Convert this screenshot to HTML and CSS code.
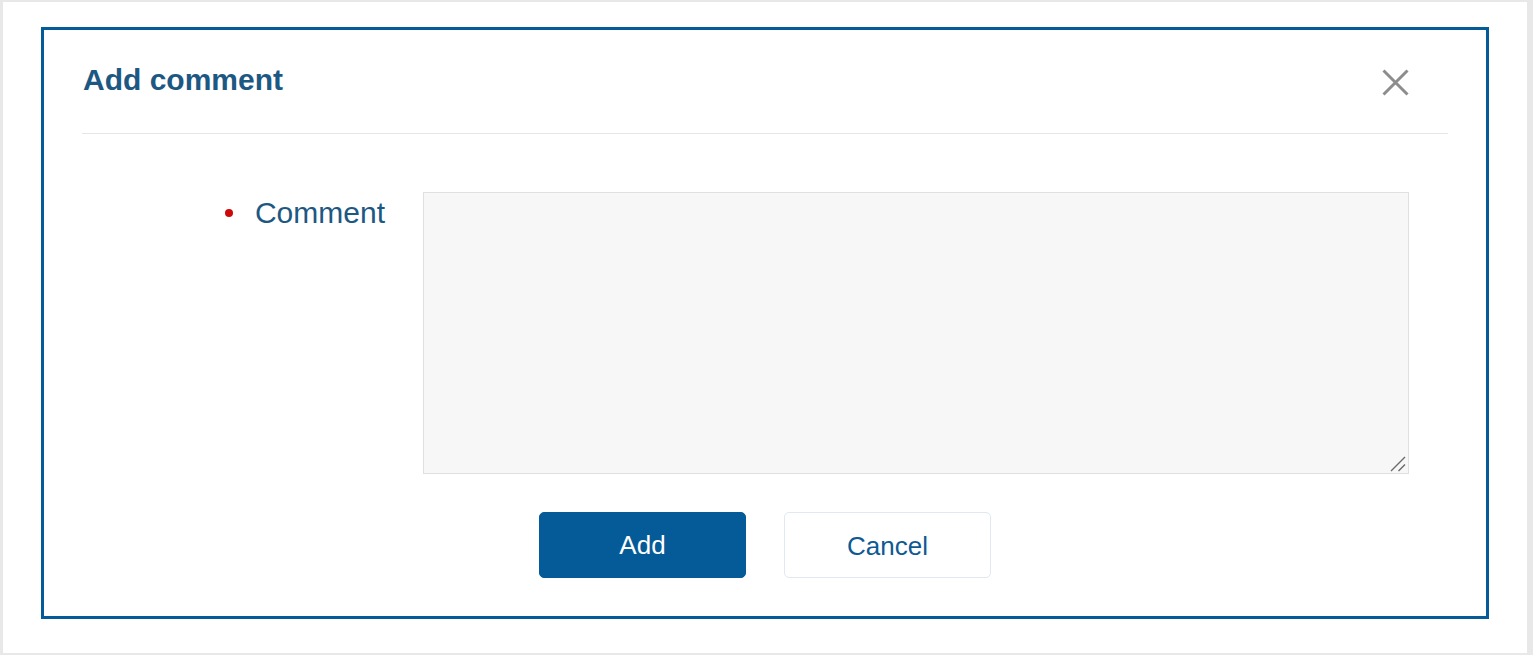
FILE: index.html
```html
<!DOCTYPE html>
<html lang="en">
<head>
<meta charset="utf-8">
<title>Add comment</title>
<link rel="stylesheet" href="styles.css">
</head>
<body>
<div class="frame">
  <div class="dialog">
    <div class="dialog-header">
      <h2 class="dialog-title">Add comment</h2>
      <button class="close-btn" aria-label="Close">
        <svg width="27" height="27" viewBox="0 0 27 27"><path d="M1.5 1.5 L25.5 25.5 M25.5 1.5 L1.5 25.5" stroke="#8d8d8d" stroke-width="3" fill="none"/></svg>
      </button>
    </div>
    <div class="form-row">
      <label class="form-label"><span class="required-dot"></span>Comment</label>
      <div class="input-wrap">
        <textarea class="form-input"></textarea>
        <svg class="grip" width="16" height="16" viewBox="0 0 16 16"><path d="M1 15 L15 1 M8.5 15 L15 8.5" stroke="#6a6a6a" stroke-width="1.4" fill="none"/></svg>
      </div>
    </div>
    <div class="actions">
      <button class="btn btn-primary">Add</button>
      <button class="btn btn-secondary">Cancel</button>
    </div>
  </div>
</div>
</body>
</html>
```

FILE: styles.css
```css
html, body {
  margin: 0;
  padding: 0;
  background: #ffffff;
}
body {
  font-family: "Liberation Sans", Arial, sans-serif;
}
.frame {
  box-sizing: border-box;
  height: 655px;
  border-style: solid;
  border-color: #e8e8e8;
  border-width: 2px 6px 2px 3px;
  padding: 25px 38px 0 38px;
  background: #ffffff;
}
.dialog {
  border: 3px solid #045b97;
  padding: 0 38px 38px 38px;
  background: #ffffff;
}
.dialog-header {
  display: flex;
  align-items: center;
  justify-content: space-between;
  padding: 32px 0 35px 1px;
  border-bottom: 1px solid #e6e6e6;
}
.dialog-title {
  margin: 0;
  font-size: 30px;
  line-height: 36px;
  font-weight: bold;
  color: #1d5883;
}
.close-btn {
  display: flex;
  border: none;
  background: none;
  padding: 0;
  margin: 4px 39px 0 0;
  cursor: pointer;
}
.form-row {
  display: flex;
  align-items: flex-start;
  margin-top: 58px;
  gap: 38px;
}
.form-label {
  width: 303px;
  display: flex;
  align-items: center;
  justify-content: flex-end;
  padding-top: 3px;
  font-size: 30px;
  line-height: 36px;
  color: #1d5883;
}
.required-dot {
  width: 8px;
  height: 8px;
  border-radius: 50%;
  background: #cc0a0a;
  margin-right: 22px;
}
.input-wrap {
  flex: 1;
  position: relative;
  display: flex;
  margin-right: 39px;
}
.form-input {
  flex: 1;
  box-sizing: border-box;
  height: 282px;
  margin: 0;
  border: 1px solid #e0e0e0;
  background: #f7f7f7;
  font-family: inherit;
  font-size: 20px;
  resize: none;
  outline: none;
}
.grip {
  position: absolute;
  right: 3px;
  bottom: 2px;
  pointer-events: none;
}
.actions {
  display: flex;
  justify-content: center;
  gap: 38px;
  margin-top: 38px;
}
.btn {
  box-sizing: border-box;
  width: 207px;
  height: 66px;
  border-radius: 5px;
  font-family: "Liberation Sans", Arial, sans-serif;
  font-size: 26px;
  cursor: pointer;
}
.btn-primary {
  background: #045b97;
  border: 1px solid #045b97;
  color: #ffffff;
}
.btn-secondary {
  background: #ffffff;
  border: 1px solid #e0e8f1;
  color: #0d5a93;
  padding-top: 3px;
}
```
